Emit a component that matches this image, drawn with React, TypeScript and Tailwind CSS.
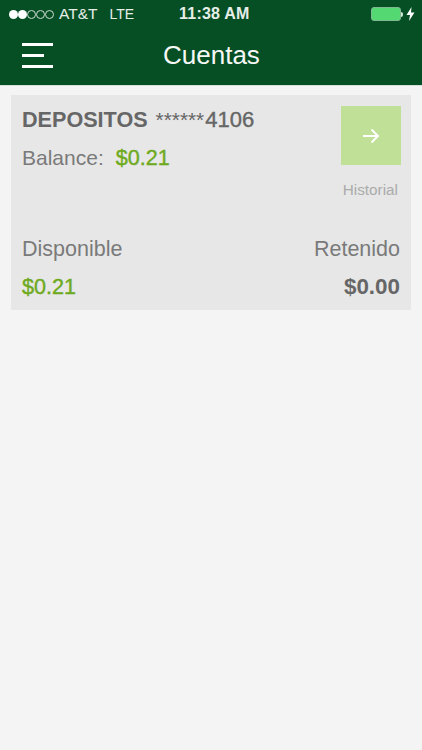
export default function App() {
  const font = { fontFamily: '"Liberation Sans", Arial, sans-serif' };
  return (
    <div style={font} className="min-h-[750px] bg-[#f4f4f4] flex flex-col">
      <header className="h-[86px] bg-[#064f25] text-white flex flex-col border-b border-[#d5e0d8]">
        <div className="h-[28px] flex items-center pl-[9px] pr-[7px] text-[15.5px] text-[#e6eee8]">
          <div className="flex items-center">
            <span className="w-[9px] h-[9px] rounded-full bg-white" />
            <span className="w-[9px] h-[9px] rounded-full bg-white" />
            <span className="w-[9px] h-[9px] rounded-full border border-[#cfdcd3]" />
            <span className="w-[9px] h-[9px] rounded-full border border-[#cfdcd3]" />
            <span className="w-[9px] h-[9px] rounded-full border border-[#cfdcd3]" />
          </div>
          <span className="ml-[5px]">AT&amp;T</span>
          <span className="ml-[12px] text-[14px]">LTE</span>
          <span className="ml-[45px] text-[16px] font-bold tracking-[0.2px]">11:38 AM</span>
          <div className="ml-auto flex items-center">
            <div className="w-[30px] h-[14px] rounded-[3px] border border-[#7fb98f] bg-[#54d872]" />
            <span className="w-[2px] h-[5px] bg-[#d5e6da] rounded-r-sm" />
            <svg width="9" height="14" viewBox="0 0 9 14" className="ml-[3px]">
              <path d="M5.5 0 L0.5 8 H4 L3 14 L8.5 5.5 H5 Z" fill="#ffffff" />
            </svg>
          </div>
        </div>
        <div className="flex-1 flex items-center pb-[3px]">
          <div className="ml-[22px] w-[32px] flex flex-col gap-[8px]">
            <span className="block h-[3px] w-[31px] bg-white" />
            <span className="block h-[3px] w-[22px] bg-white" />
            <span className="block h-[3px] w-[31px] bg-white" />
          </div>
          <h1 className="ml-[109px] text-[26px] leading-none font-normal text-[#f6f8f6]">Cuentas</h1>
        </div>
      </header>
      <main className="mx-[11px] mt-[9px] h-[215px] bg-[#e7e7e7] px-[11px] pt-[11px] flex flex-col">
        <div className="flex justify-between">
          <div className="pt-[1px]">
            <div className="text-[21.6px] leading-[26px] text-[#666666] whitespace-nowrap">
              <span className="font-bold">DEPOSITOS</span>{" "}
              <span className="ml-[2px] text-[20.8px]">******</span>
              <span className="ml-[1px] text-[22px] [-webkit-text-stroke:0.4px_#666666]">4106</span>
            </div>
            <div className="mt-[12px] flex items-center text-[21px] leading-[26px]">
              <span className="text-[#7a7a7a]">Balance:</span>
              <span className="ml-[12px] text-[21.6px] text-[#6eaa1e] [-webkit-text-stroke:0.4px_#6eaa1e]">$0.21</span>
            </div>
          </div>
          <div className="flex flex-col items-end -mr-[1px]">
            <div className="w-[60px] h-[59px] bg-[#c0df97] flex items-center justify-center">
              <svg width="17" height="16" viewBox="0 0 17 16" fill="none" stroke="#ffffff" strokeWidth="2">
                <path d="M0 8 H15 M8.5 1.5 L15 8 L8.5 14.5" />
              </svg>
            </div>
            <span className="mt-[15px] mr-[3px] text-[15.3px] leading-[20px] text-[#ababab]">Historial</span>
          </div>
        </div>
        <div className="mt-[36px] flex justify-between text-[21.5px] leading-[26px] text-[#7a7a7a]">
          <span>Disponible</span>
          <span>Retenido</span>
        </div>
        <div className="mt-[12px] flex justify-between text-[21.6px] leading-[26px]">
          <span className="text-[#6eaa1e] [-webkit-text-stroke:0.4px_#6eaa1e]">$0.21</span>
          <span className="text-[22.4px] font-bold text-[#666666]">$0.00</span>
        </div>
      </main>
    </div>
  );
}
